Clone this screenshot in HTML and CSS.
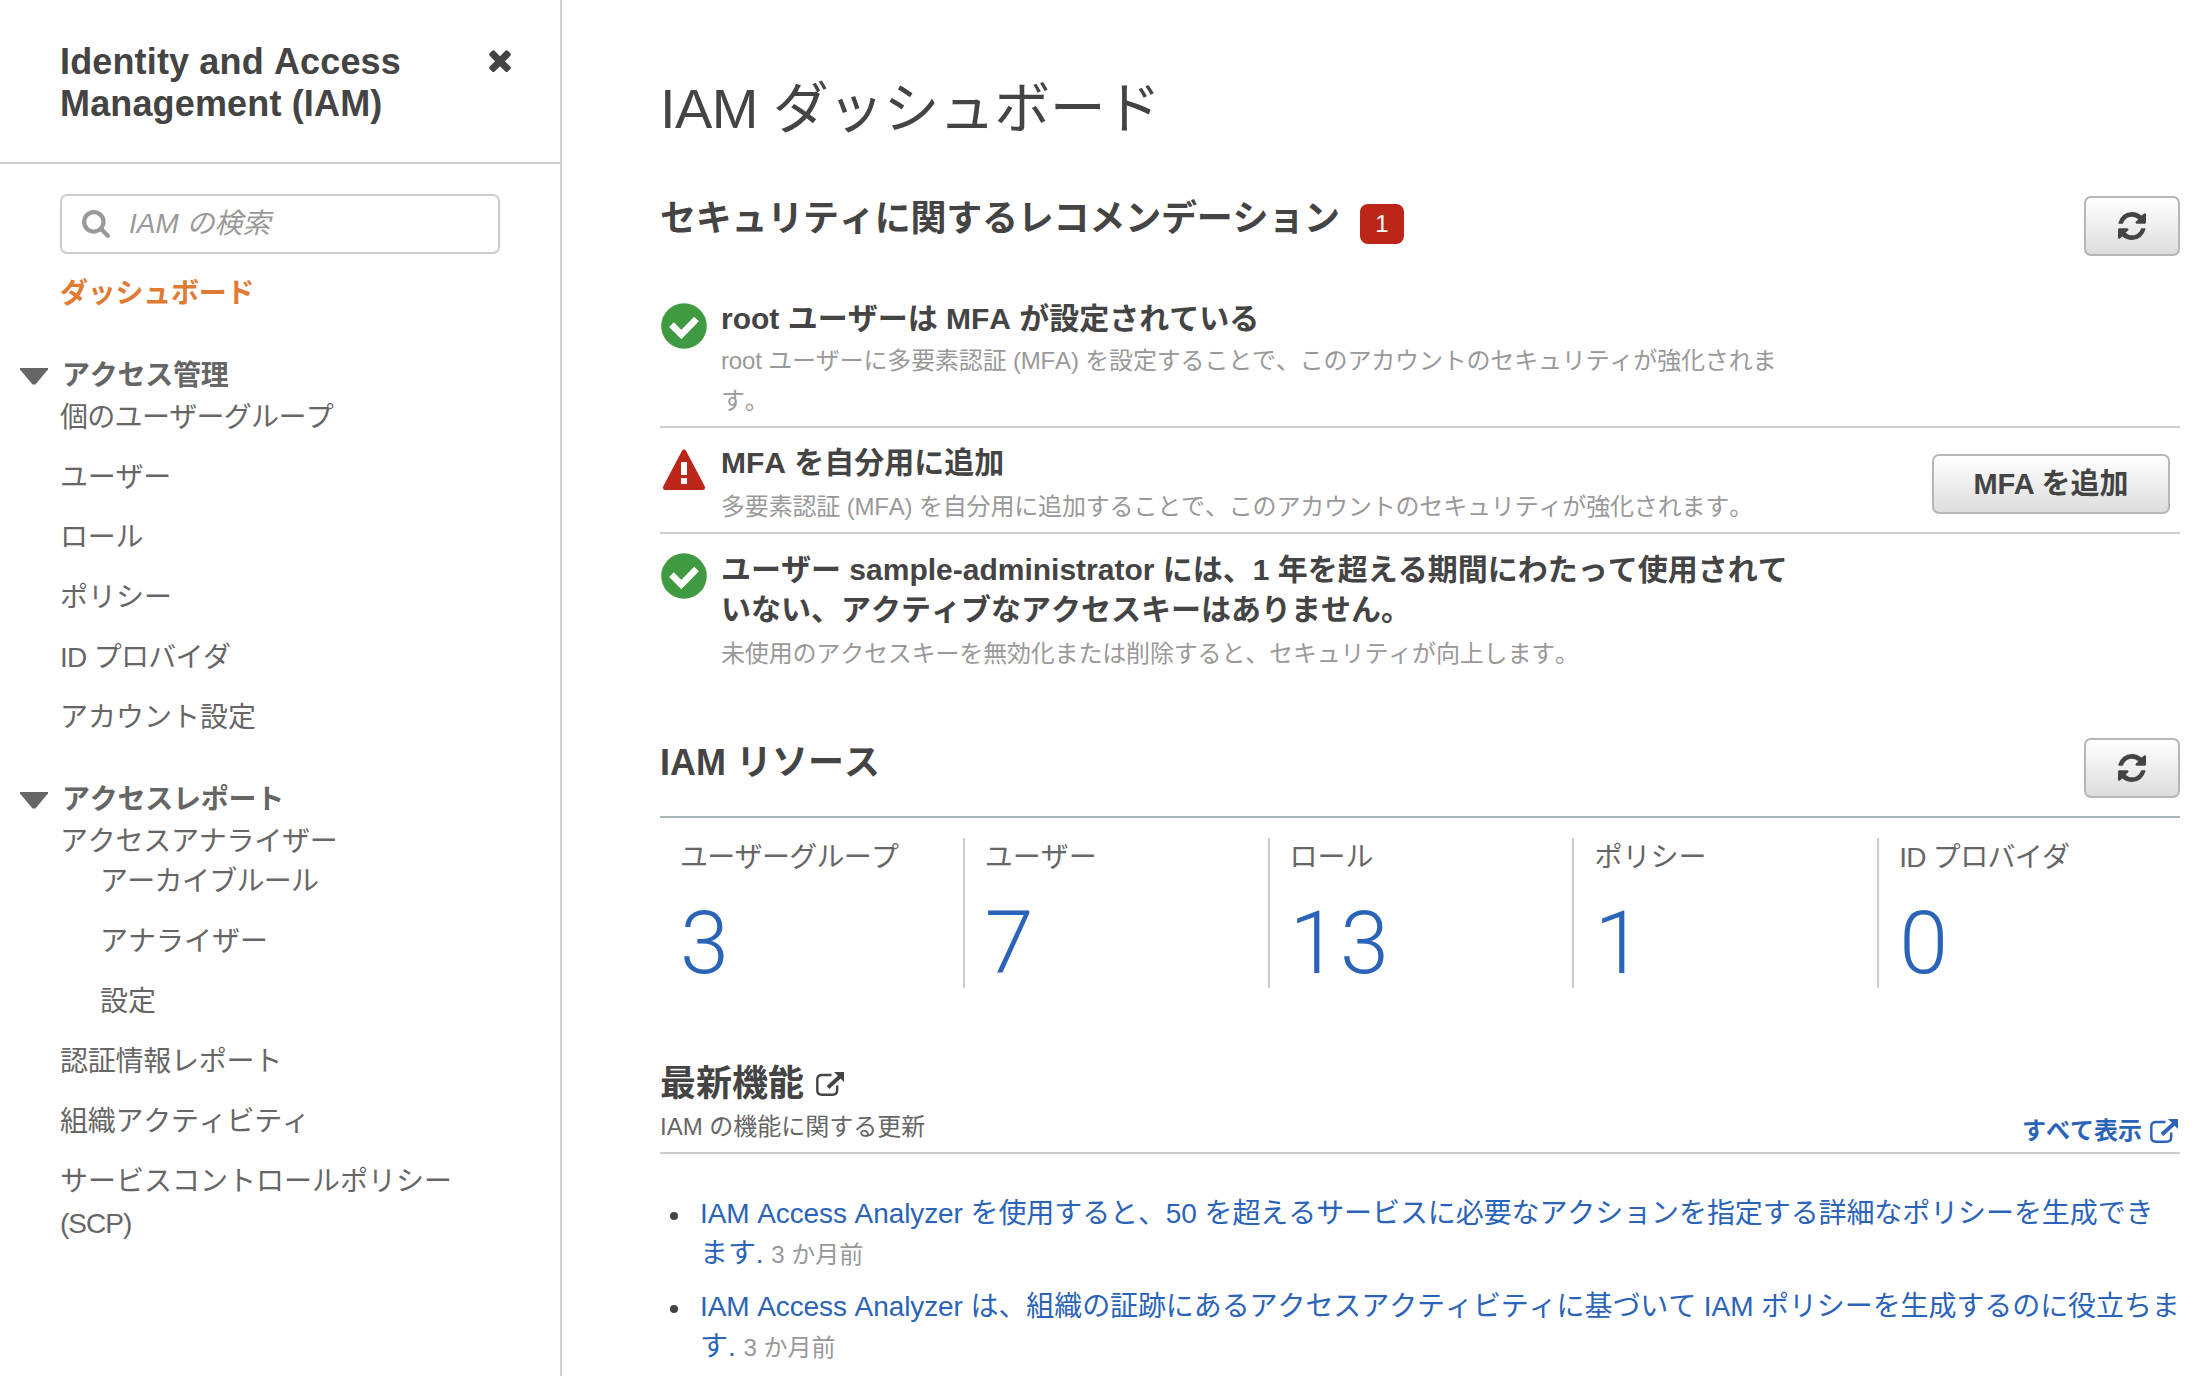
FILE: index.html
```html
<!DOCTYPE html>
<html lang="ja">
<head>
<meta charset="utf-8">
<title>IAM ダッシュボード</title>
<link rel="stylesheet" href="styles.css">
</head>
<body>
<svg class="sprite" aria-hidden="true">
  <symbol id="times" viewBox="302 238 1188 1316"><path d="M1490 1322q0 40-28 68l-136 136q-28 28-68 28t-68-28l-294-294-294 294q-28 28-68 28t-68-28l-136-136q-28-28-28-68t28-68l294-294-294-294q-28-28-28-68t28-68l136-136q28-28 68-28t68 28l294 294 294-294q28-28 68-28t68 28l136 136q28 28 28 68t-28 68l-294 294 294 294q28 28 28 68z"/></symbol>
  <symbol id="search" viewBox="64 128 1664 1664"><path d="M1216 832q0-185-131.5-316.5t-316.5-131.5-316.5 131.5-131.5 316.5 131.5 316.5 316.5 131.5 316.5-131.5 131.5-316.5zm512 832q0 52-38 90t-90 38q-54 0-90-38l-343-342q-179 124-399 124-143 0-273.5-55.5t-225-150-150-225-55.5-273.5 55.5-273.5 150-225 225-150 273.5-55.5 273.5 55.5 225 150 150 225 55.5 273.5q0 220-124 399l343 343q37 37 37 90z"/></symbol>
  <symbol id="refresh" viewBox="128 128 1536 1536"><path d="M1639 1056q0 5-1 7-64 268-268 434.5t-478 166.5q-146 0-282.5-55t-243.5-157l-129 129q-19 19-45 19t-45-19-19-45v-448q0-26 19-45t45-19h448q26 0 45 19t19 45-19 45l-137 137q71 66 161 102t187 36q134 0 250-65t186-179q11-17 53-117 8-23 30-23h192q13 0 22.5 9.5t9.5 22.5zm25-800v448q0 26-19 45t-45 19h-448q-26 0-45-19t-19-45 19-45l138-138q-148-137-349-137-134 0-250 65t-186 179q-11 17-53 117-8 23-30 23h-199q-13 0-22.5-9.5t-9.5-22.5v-7q65-268 270-434.500t480-166.500q146 0 284 55.500t245 156.500l130-129q19-19 45-19t45 19 19 45z"/></symbol>
  <symbol id="check" viewBox="0 0 46 46"><circle cx="23" cy="23" r="22.8" fill="#3f9a41"/><path d="M10.500 21.700l9.800 9.800 15.200-15.500" fill="none" stroke="#fff" stroke-width="6.600" stroke-linejoin="miter"/></symbol>
  <symbol id="warn" viewBox="0 0 44 42"><path d="M20 1.800q2-3 4 0L42.600 37q1.400 4-2 4H3.400q-3.400 0-2-4z" fill="#bc2618"/><path d="M19 13h6v13h-6zM19 29h6v6h-6z" fill="#fff"/></symbol>
  <symbol id="external" viewBox="0 0 28 24"><path d="M15.500 3H6Q1.300 3 1.300 7.500v10.500q0 4.700 4.700 4.700h10.500q4.700 0 4.700-4.700v-4.500" fill="none" stroke="currentColor" stroke-width="2.400"/><path d="M12 15.500L24 4.500" fill="none" stroke="currentColor" stroke-width="3.800"/><path d="M18 0h10v10z" fill="currentColor"/></symbol>
</svg>
<div class="layout">
  <nav class="sidebar">
    <header class="side-head">
      <div class="side-title">Identity and Access<br>Management (IAM)</div>
      <svg class="close"><use href="#times"/></svg>
    </header>
    <div class="search"><svg class="search-icon"><use href="#search"/></svg><span>IAM の検索</span></div>
    <a class="item active snug">ダッシュボード</a>
    <div class="group snug"><i class="caret"></i>アクセス管理</div>
    <a class="item tight">個のユーザーグループ</a>
    <a class="item snug">ユーザー</a>
    <a class="item snug">ロール</a>
    <a class="item">ポリシー</a>
    <a class="item tight">ID プロバイダ</a>
    <a class="item">アカウント設定</a>
    <div class="group snug"><i class="caret"></i>アクセスレポート</div>
    <a class="item parent snug">アクセスアナライザー</a>
    <a class="item sub tight">アーカイブルール</a>
    <a class="item sub">アナライザー</a>
    <a class="item sub">設定</a>
    <a class="item snug">認証情報レポート</a>
    <a class="item snug">組織アクティビティ</a>
    <a class="item">サービスコントロールポリシー<br><span class="scp">(SCP)</span></a>
  </nav>
  <main class="main">
    <h1>IAM ダッシュボード</h1>
    <section class="recs">
      <div class="bar">
        <h2>セキュリティに関するレコメンデーション</h2><span class="badge">1</span>
        <button class="btn refresh"><svg><use href="#refresh"/></svg></button>
      </div>
      <div class="rec first">
        <svg class="status"><use href="#check"/></svg>
        <div class="rec-text">
          <h3>root ユーザーは MFA が設定されている</h3>
          <p>root ユーザーに多要素認証 (MFA) を設定することで、このアカウントのセキュリティが強化されま<br>す。</p>
        </div>
      </div>
      <div class="rec second">
        <svg class="status warn"><use href="#warn"/></svg>
        <div class="rec-text">
          <h3>MFA を自分用に追加</h3>
          <p>多要素認証 (MFA) を自分用に追加することで、このアカウントのセキュリティが強化されます。</p>
        </div>
        <button class="btn add">MFA を追加</button>
      </div>
      <div class="rec third">
        <svg class="status"><use href="#check"/></svg>
        <div class="rec-text">
          <h3>ユーザー sample-administrator には、1 年を超える期間にわたって使用されて<br>いない、アクティブなアクセスキーはありません。</h3>
          <p>未使用のアクセスキーを無効化または削除すると、セキュリティが向上します。</p>
        </div>
      </div>
    </section>
    <section class="resources">
      <div class="bar">
        <h2>IAM リソース</h2>
        <button class="btn refresh"><svg><use href="#refresh"/></svg></button>
      </div>
      <div class="grid">
        <div class="cell"><span class="tight">ユーザーグループ</span><a>3</a></div>
        <div class="cell"><span>ユーザー</span><a>7</a></div>
        <div class="cell"><span>ロール</span><a>13</a></div>
        <div class="cell"><span>ポリシー</span><a>1</a></div>
        <div class="cell"><span class="tight">ID プロバイダ</span><a>0</a></div>
      </div>
    </section>
    <section class="news">
      <div class="news-head">
        <div>
          <h2>最新機能<svg class="ext"><use href="#external"/></svg></h2>
          <p>IAM の機能に関する更新</p>
        </div>
        <a class="all">すべて表示<svg class="ext"><use href="#external"/></svg></a>
      </div>
      <ul>
        <li><a>IAM Access Analyzer を使用すると、50 を超えるサービスに必要なアクションを指定する詳細なポリシーを生成でき<br>ます.</a> <small>3 か月前</small></li>
        <li><a>IAM Access Analyzer は、組織の証跡にあるアクセスアクティビティに基づいて IAM ポリシーを生成するのに役立ちま<br>す.</a> <small>3 か月前</small></li>
      </ul>
    </section>
  </main>
</div>
</body>
</html>
```
FILE: styles.css
```css
* { box-sizing: border-box; }
body, h1, h2, h3, p, ul { margin: 0; padding: 0; }
html, body { height: 100%; overflow: hidden; }
body {
  background: #fff;
  color: #444;
  font: 28px/40px "Liberation Sans", "Noto Sans CJK JP", sans-serif;
  font-kerning: none;
  white-space: nowrap;
}
svg { display: block; fill: currentColor; flex: none; }
.sprite { display: none; }
.layout { display: flex; height: 1376px; }
.snug { letter-spacing: -0.25px; }
.tight { letter-spacing: -0.7px; }

.sidebar {
  width: 562px;
  flex: none;
  border-right: 2px solid #ccd0d4;
  color: #666;
  line-height: 42px;
  overflow: hidden;
}
.side-head {
  display: flex;
  justify-content: space-between;
  height: 164px;
  padding: 41px 48px 0 60px;
  border-bottom: 2px solid #ccc;
  color: #444;
}
.side-title { font-size: 36px; font-weight: 700; letter-spacing: 0.15px; }
.close { width: 24px; height: 24px; margin-top: 7px; }
.search {
  display: flex;
  align-items: center;
  width: 440px;
  height: 60px;
  margin: 30px 0 19px 60px;
  padding-left: 20px;
  gap: 19px;
  border: 2px solid #ccc;
  border-radius: 7px;
  color: #999;
  font-style: italic;
}
.search-icon { width: 28px; height: 28px; }
.item { display: block; padding-left: 60px; margin-bottom: 18px; }
.active { color: #e07b33; font-weight: 700; margin-bottom: 40px; }
.group { display: flex; align-items: center; gap: 14px; padding-left: 20px; font-weight: 700; }
.item + .group { margin-top: 40px; }
.caret {
  width: 28px;
  height: 17px;
  background: #666;
  clip-path: polygon(0 0, 100% 0, 100% 12%, 55% 100%, 45% 100%, 0 12%);
}
.parent { margin-bottom: -2px; }
.sub { padding-left: 100px; }
.scp { letter-spacing: -1px; }

.main { flex: none; width: 1642px; padding: 75px 24px 0 98px; }
h1 { height: 121px; font-size: 56px; font-weight: 400; line-height: 68px; letter-spacing: -0.6px; }
h2 { font-size: 36px; line-height: 46px; }
.recs h2 { letter-spacing: -0.22px; }
.bar { display: flex; align-items: flex-start; }
.badge {
  width: 44px;
  height: 40px;
  margin: 8px 0 0 20px;
  border-radius: 8px;
  background: #bc2618;
  color: #fff;
  font-size: 24px;
  text-align: center;
}
.btn {
  height: 60px;
  border: 2px solid #b7b7b7;
  border-radius: 7px;
  background: linear-gradient(#fff, #ddd);
  color: #444;
  font: 700 29px/54px "Liberation Sans", "Noto Sans CJK JP", sans-serif;
  padding: 0;
}
.refresh { display: flex; align-items: center; justify-content: center; width: 96px; margin-left: auto; }
.refresh svg { width: 28px; height: 28px; }
.rec { display: flex; border-bottom: 2px solid #ccc; }
.first { height: 172px; padding-top: 48px; }
.second { height: 106px; padding-top: 20px; }
.third { height: 204px; padding-top: 20px; border: 0; }
.status { width: 46px; height: 46px; margin: -1px 14px 0 1px; }
.warn { width: 44px; height: 42px; margin: 1px 15px 0 2px; }
h3 { font-size: 30px; line-height: 40px; }
.first h3, .second h3 { margin-top: -5px; }
.third h3 { margin-top: -4px; }
.rec p { color: #999; font-size: 24px; letter-spacing: -0.17px; padding-top: 2px; }
.second p { padding-top: 4px; }
.third p { padding-top: 4px; }
.add { width: 238px; margin: 6px 10px 0 auto; }

.resources > .bar { height: 80px; border-bottom: 2px solid #aab7b8; }
.resources h2 { margin-top: 2px; }
.grid { display: flex; padding-top: 20px; }
.cell {
  display: flex;
  flex: none;
  flex-direction: column;
  width: 304.800px;
  height: 150px;
  padding-left: 20px;
  border-right: 2px solid #ccc;
  color: #666;
}
.cell:last-child { border: 0; }
.cell a { color: #2a63b8; font: 300 88px/129px Roboto, sans-serif; letter-spacing: 1.500px; }

.news-head {
  display: flex;
  justify-content: space-between;
  align-items: flex-end;
  height: 98px;
  margin-top: 68px;
  border-bottom: 2px solid #ccc;
}
.news h2 { display: flex; align-items: center; gap: 12px; }
.ext { width: 28px; height: 24px; }
.news-head p { color: #666; font-size: 24px; line-height: 40px; height: 45px; }
.all { display: flex; align-items: center; gap: 8px; padding: 0 2px 1px 0; color: #2a63b8; font-size: 24px; font-weight: 700; }
ul { list-style: none; padding-top: 40px; }
li { position: relative; padding-left: 40px; margin-bottom: 12px; }
li::before { content: ""; position: absolute; left: 10px; top: 18px; width: 8px; height: 8px; border-radius: 50%; background: #444; }
li a { color: #2a63b8; letter-spacing: -0.09px; }
li small { color: #999; font-size: 24px; }
```
